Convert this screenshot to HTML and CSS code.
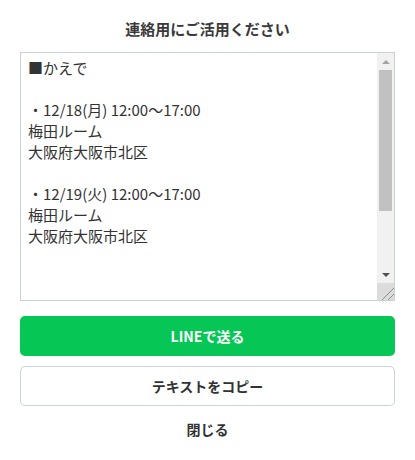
FILE: index.html
```html
<!DOCTYPE html>
<html lang="ja">
<head>
<meta charset="utf-8">
<link rel="stylesheet" href="styles.css">
</head>
<body>
<div class="modal">
  <h2 class="title">連絡用にご活用ください</h2>
  <div class="memo-box">
    <textarea class="memo">■かえで

・12/18(月) 12:00〜17:00
梅田ルーム
大阪府大阪市北区

・12/19(火) 12:00〜17:00
梅田ルーム
大阪府大阪市北区</textarea>
    <div class="scrollbar" aria-hidden="true">
      <div class="sb-btn sb-up"></div>
      <div class="sb-track"><div class="sb-thumb"></div></div>
      <div class="sb-btn sb-down"></div>
      <div class="sb-corner"></div>
    </div>
  </div>
  <button class="btn btn-line">LINEで送る</button>
  <button class="btn btn-copy">テキストをコピー</button>
  <button class="btn-close">閉じる</button>
</div>
</body>
</html>
```
FILE: styles.css
```css
html, body {
  margin: 0;
  padding: 0;
  background: #fff;
}
body {
  font-family: "Noto Sans CJK JP", "Noto Sans", sans-serif;
  color: #333;
}
.modal {
  display: flex;
  flex-direction: column;
  padding: 18px 20px 0;
}
.title {
  margin: 0 0 12px;
  font-size: 15px;
  line-height: 22px;
  font-weight: 700;
  text-align: center;
  color: #3a3a3a;
}
.memo-box {
  display: flex;
  height: 249px;
  box-sizing: border-box;
  border: 1px solid #c9d2da;
}
.memo {
  flex: 1;
  min-width: 0;
  box-sizing: border-box;
  margin: 0;
  padding: 4px 7px 6px;
  border: none;
  outline: none;
  font-family: "Noto Sans CJK JP", "Noto Sans", sans-serif;
  font-size: 15px;
  line-height: 21px;
  color: #333;
  resize: none;
  overflow: hidden;
}
.scrollbar {
  display: flex;
  flex-direction: column;
  width: 17px;
  flex: none;
  background: #f1f1f1;
}
.sb-btn {
  height: 17px;
  display: flex;
  align-items: center;
  justify-content: center;
}
.sb-up::before,
.sb-down::before {
  content: "";
  width: 0;
  height: 0;
  border-left: 4px solid transparent;
  border-right: 4px solid transparent;
}
.sb-up::before {
  border-bottom: 4px solid #a3a3a3;
}
.sb-down::before {
  border-top: 4px solid #505050;
}
.sb-track {
  flex: 1;
  display: flex;
  flex-direction: column;
  padding: 0 2px;
}
.sb-thumb {
  height: 141px;
  background: #c1c1c1;
}
.sb-corner {
  height: 17px;
  background-color: #dcdcdc;
  background-image: linear-gradient(135deg,
    transparent 62%, #8a8a8a 62%, #8a8a8a 67%, transparent 67%,
    transparent 80%, #8a8a8a 80%, #8a8a8a 85%, transparent 85%);
}
.btn {
  box-sizing: border-box;
  width: 100%;
  height: 40px;
  border-radius: 5px;
  font-family: "Noto Sans CJK JP", "Noto Sans", sans-serif;
  font-size: 14px;
  font-weight: 700;
  cursor: pointer;
}
.btn-line {
  margin-top: 15px;
  border: none;
  background: #06c755;
  color: #fff;
}
.btn-copy {
  margin-top: 10px;
  border: 1px solid #ccd3da;
  background: #fff;
  color: #333;
}
.btn-close {
  align-self: center;
  margin-top: 9px;
  padding: 4px 10px;
  border: none;
  background: none;
  font-family: "Noto Sans CJK JP", "Noto Sans", sans-serif;
  font-size: 14px;
  font-weight: 700;
  color: #333;
  cursor: pointer;
}
```
